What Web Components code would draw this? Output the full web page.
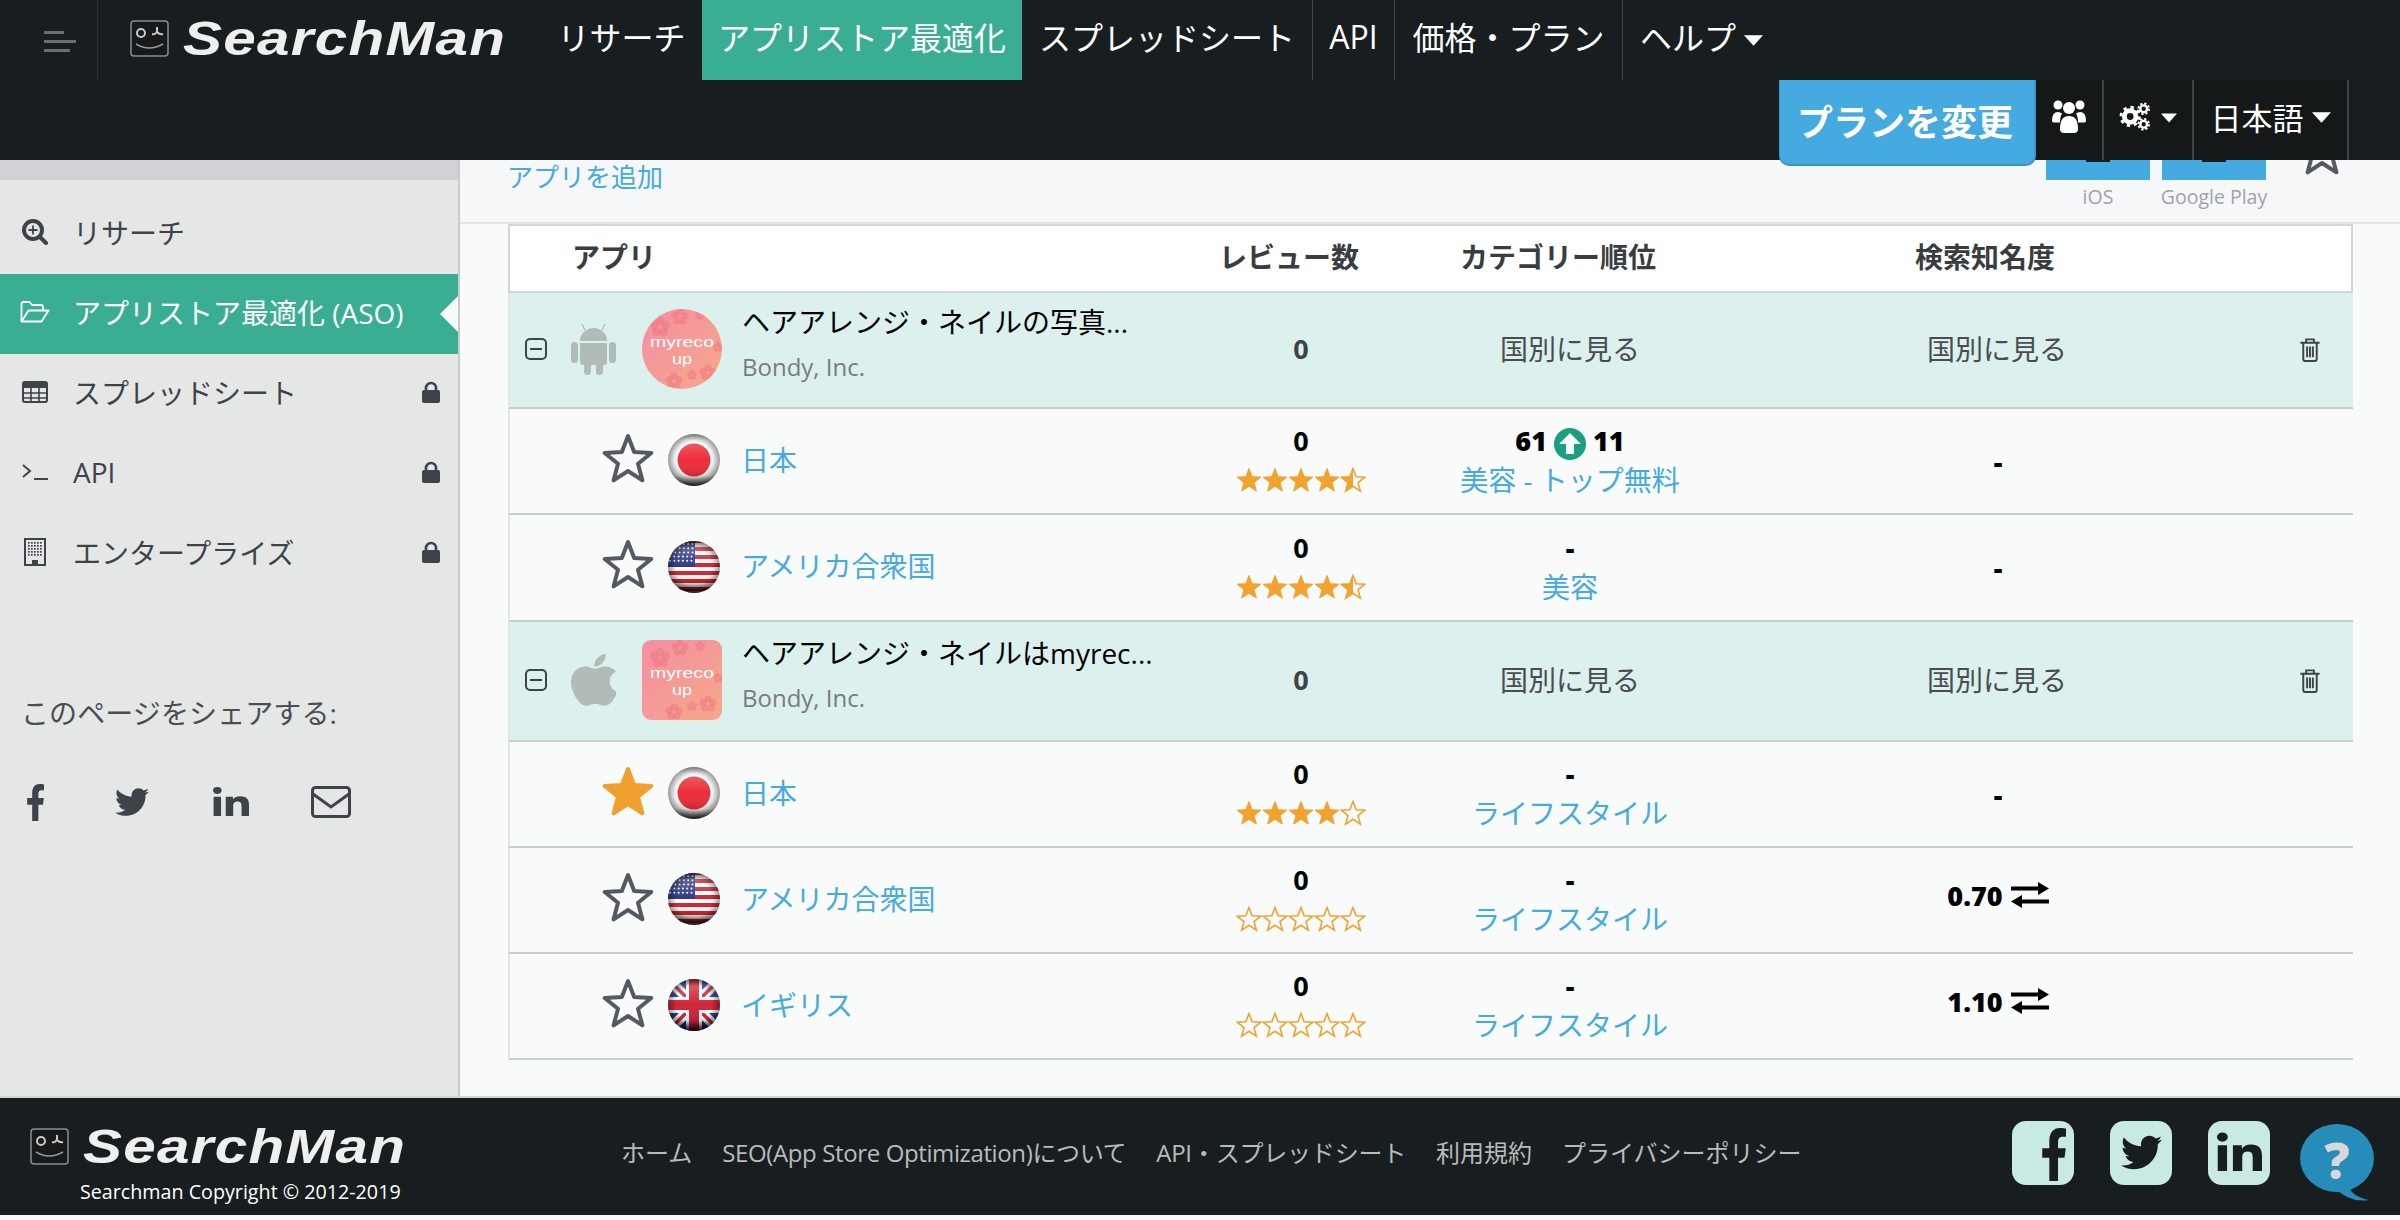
<!DOCTYPE html>
<html lang="ja">
<head>
<meta charset="utf-8">
<title>SearchMan</title>
<style>
html,body{margin:0;padding:0;width:2400px;height:1220px;overflow:hidden;background:#f9fbfa;}
body{display:flex;flex-direction:column;font-family:"Open Sans","Noto Sans CJK JP",sans-serif;}
</style>
</head>
<body>
<sm-topbar></sm-topbar>
<sm-layout>
  <sm-sidebar slot="side"></sm-sidebar>
  <sm-main slot="main">
    <sm-toolbar></sm-toolbar>
    <sm-table>
      <sm-group-row kind="android" shape="circle" title-text="ヘアアレンジ・ネイルの写真..." h="116"></sm-group-row>
      <sm-sub-row country="jp" name="日本" rating="4.5" h="106">
        <span slot="rank-top" class="r"><b>61</b><sm-icon name="uparrow" size="32" style="margin:0 7px"></sm-icon><b>11</b></span>
        <span slot="rank-link">美容 - トップ無料</span>
        <b slot="search">-</b>
      </sm-sub-row>
      <sm-sub-row country="us" name="アメリカ合衆国" rating="4.5" h="107">
        <b slot="rank-top">-</b>
        <span slot="rank-link">美容</span>
        <b slot="search">-</b>
      </sm-sub-row>
      <sm-group-row kind="apple" shape="square" title-text="ヘアアレンジ・ネイルはmyrec..." h="120"></sm-group-row>
      <sm-sub-row country="jp" name="日本" rating="4" fav h="106">
        <b slot="rank-top">-</b>
        <span slot="rank-link">ライフスタイル</span>
        <b slot="search">-</b>
      </sm-sub-row>
      <sm-sub-row country="us" name="アメリカ合衆国" rating="0" h="106" lifted>
        <b slot="rank-top">-</b>
        <span slot="rank-link">ライフスタイル</span>
        <b slot="search">0.70</b>
      </sm-sub-row>
      <sm-sub-row country="uk" name="イギリス" rating="0" h="106" lifted>
        <b slot="rank-top">-</b>
        <span slot="rank-link">ライフスタイル</span>
        <b slot="search">1.10</b>
      </sm-sub-row>
    </sm-table>
  </sm-main>
</sm-layout>
<sm-footer></sm-footer>

<script>
const FONT = '"Open Sans","Noto Sans CJK JP",sans-serif';
const TW = 'M459.37 151.716c.325 4.548.325 9.097.325 13.645 0 138.72-105.583 298.558-298.558 298.558-59.452 0-114.68-17.219-161.137-47.106 8.447.974 16.568 1.299 25.34 1.299 49.055 0 94.213-16.568 130.274-44.832-46.132-.975-84.792-31.188-98.112-72.772 6.498.974 12.995 1.624 19.818 1.624 9.421 0 18.843-1.3 27.614-3.573-48.081-9.747-84.143-51.98-84.143-102.985v-1.299c13.969 7.797 30.214 12.67 47.431 13.319-28.264-18.843-46.781-51.005-46.781-87.391 0-19.492 5.197-37.36 14.294-52.954 51.655 63.675 129.3 105.258 216.365 109.807-1.624-7.797-2.599-15.918-2.599-24.04 0-57.828 46.782-104.934 104.934-104.934 30.213 0 57.502 12.67 76.67 33.137 23.715-4.548 46.456-13.32 66.599-25.34-7.798 24.366-24.366 44.833-46.132 57.827 21.117-2.273 41.584-8.122 60.426-16.243-14.292 20.791-32.161 39.308-52.628 54.253z';
const FB = 'M279.14 288l14.22-92.66h-88.91v-60.13c0-25.35 12.42-50.06 52.24-50.06h40.42V6.26S260.43 0 225.36 0c-73.22 0-121.08 44.38-121.08 124.72v70.62H22.89V288h81.39v224h100.17V288z';
const LI = 'M100.28 448H7.4V148.9h92.88zM53.79 108.1C24.09 108.1 0 83.5 0 53.8a53.79 53.79 0 0 1 107.58 0c0 29.7-24.1 54.3-53.79 54.3zM447.9 448h-92.68V302.4c0-34.7-.7-79.2-48.29-79.2-48.29 0-55.69 37.7-55.69 76.7V448h-92.78V148.9h89.08v40.8h1.3c12.4-23.5 42.69-48.3 87.88-48.3 94 0 111.28 61.9 111.28 142.3V448z';
const AP = 'M318.7 268.7c-.2-36.7 16.4-64.4 50-84.8-18.8-26.9-47.2-41.7-84.7-44.6-35.5-2.8-74.3 20.7-88.5 20.7-15 0-49.4-19.7-76.4-19.7C63.3 141.2 4 184.8 4 273.5q0 39.3 14.4 81.2c12.8 36.7 59 126.7 107.2 125.2 25.2-.6 43-17.9 75.8-17.9 31.8 0 48.3 17.9 76.4 17.9 48.6-.7 90.4-82.5 102.6-119.3-65.2-30.7-61.7-90-61.7-91.9zm-56.6-164.2c27.3-32.4 24.8-61.9 24-72.5-24.1 1.4-52 16.4-67.9 34.9-17.5 19.8-27.8 44.3-25.6 71.9 26.1 2 49.9-11.4 69.5-34.3z';

const ICONS = {
  search:(c)=>`<svg viewBox="0 0 26 26" width="100%" height="100%"><circle cx="11" cy="11" r="9" fill="none" stroke="${c}" stroke-width="4"/><path d="M18 18l6 6" stroke="${c}" stroke-width="4" stroke-linecap="round"/><path d="M11 6.5v9M6.5 11h9" stroke="${c}" stroke-width="1.8"/></svg>`,
  folder:(c)=>`<svg viewBox="0 0 30 24" width="100%" height="100%" fill="none" stroke="${c}" stroke-width="1.8" stroke-linejoin="round"><path d="M1.5 21V4q0-2 2-2h6l2.5 3h9q2 0 2 2v3"/><path d="M1.5 21.5h20l7-11H8.500z"/></svg>`,
  table:(c)=>`<svg viewBox="0 0 26 22" width="100%" height="100%"><rect x="1" y="1" width="24" height="20" rx="2" fill="none" stroke="${c}" stroke-width="2"/><path d="M1 2h24v5H1z" fill="${c}"/><path d="M1 12h24M1 17h24M9 6v15M17 6v15" stroke="${c}" stroke-width="1.6"/></svg>`,
  terminal:(c)=>`<svg viewBox="0 0 26 18" width="100%" height="100%" fill="none" stroke="${c}" stroke-width="2"><path d="M1 2l7 6-7 6M12 16h14"/></svg>`,
  building:(c)=>{let d='';for(let y=4;y<19;y+=3)for(let x=4;x<19;x+=3)d+=`<rect x="${x}" y="${y}" width="1.7" height="1.7" fill="${c}"/>`;return `<svg viewBox="0 0 22 28" width="100%" height="100%"><rect x="1" y="1" width="20" height="26" fill="none" stroke="${c}" stroke-width="2"/>${d}<path d="M8 27v-5h6v5z" fill="${c}"/></svg>`},
  lock:(c)=>`<svg viewBox="0 0 18 22" width="100%" height="100%"><path d="M4 10V7a5 5 0 0 1 10 0v3" fill="none" stroke="${c}" stroke-width="2.600"/><rect x="0" y="9" width="18" height="13" rx="2" fill="${c}"/></svg>`,
  fb:(c)=>`<svg viewBox="20 0 276 512" width="100%" height="100%" preserveAspectRatio="none"><path d="${FB}" fill="${c}"/></svg>`,
  tw:(c)=>`<svg viewBox="0 0 512 512" width="100%" height="100%"><path d="${TW}" fill="${c}"/></svg>`,
  li:(c)=>`<svg viewBox="0 0 448 512" width="100%" height="100%" preserveAspectRatio="none"><path d="${LI}" fill="${c}" transform="translate(0,16)"/></svg>`,
  mail:(c)=>`<svg viewBox="0 0 40 32" width="100%" height="100%" fill="none" stroke="${c}" stroke-width="3"><rect x="1.500" y="1.500" width="37" height="29" rx="3"/><path d="M2 8l18 13L38 8"/></svg>`,
  users:(c)=>`<svg viewBox="0 0 34 34" width="100%" height="100%" fill="${c}"><circle cx="6" cy="6" r="4.500"/><circle cx="28" cy="6" r="4.500"/><circle cx="17" cy="9" r="6"/><path d="M0 22q0-9 6-9 2 0 4 1.500-2 3-2 9H2q-2 0-2-1.500z"/><path d="M34 22q0-9-6-9-2 0-4 1.500 2 3 2 9h6q2 0 2-1.500z"/><path d="M8 30q0-13 9-13t9 13q0 4-4 4H12q-4 0-4-4z"/></svg>`,
  gears:(c)=>`<svg viewBox="0 0 32 30" width="100%" height="100%" fill="none" stroke="${c}"><circle cx="11" cy="15" r="6" stroke-width="5"/><circle cx="11" cy="15" r="9.500" stroke-width="3" stroke-dasharray="3.500 3.960"/><circle cx="25" cy="7" r="3.500" stroke-width="2.500"/><circle cx="25" cy="7" r="5.500" stroke-width="2" stroke-dasharray="2.300 2"/><circle cx="25" cy="23" r="3.500" stroke-width="2.500"/><circle cx="25" cy="23" r="5.500" stroke-width="2" stroke-dasharray="2.300 2"/></svg>`,
  caret:(c)=>`<svg viewBox="0 0 20 11" width="100%" height="100%"><path d="M0 0h20L10 11z" fill="${c}"/></svg>`,
  minus:(c)=>`<svg viewBox="0 0 22 22" width="100%" height="100%" fill="none" stroke="${c}" stroke-width="2"><rect x="1" y="1" width="20" height="20" rx="4"/><path d="M5 11h12"/></svg>`,
  trash:(c)=>`<svg viewBox="0 0 22 26" width="100%" height="100%" fill="none" stroke="${c}" stroke-width="2"><path d="M1 6h20M7 6V2.500h8V6M4 6v17q0 2 2 2h10q2 0 2-2V6M8 10v11M11 10v11M14 10v11"/></svg>`,
  android:(c)=>`<svg viewBox="0 0 45 52" width="100%" height="100%" fill="${c}"><path d="M9 18a13.500 13 0 0 1 27 0z"/><path d="M9 20h27v19q0 3-3 3H12q-3 0-3-3z"/><rect x="0" y="19" width="7" height="21" rx="3.500"/><rect x="38" y="19" width="7" height="21" rx="3.500"/><rect x="13" y="38" width="7" height="14" rx="3.500"/><rect x="25" y="38" width="7" height="14" rx="3.500"/><path d="M14 7l-3-6M31 7l3-6" stroke="${c}" stroke-width="1.200"/></svg>`,
  apple:(c)=>`<svg viewBox="4 32 365 449" width="100%" height="100%" preserveAspectRatio="none"><path d="${AP}" fill="${c}"/></svg>`,
  uparrow:()=>`<svg viewBox="0 0 32 32" width="100%" height="100%"><circle cx="16" cy="16" r="16" fill="#1c9e83"/><path d="M16 5l11 11h-7v10h-8V16H5z" fill="#f5fbfa"/></svg>`,
  swap:(c)=>`<svg viewBox="0 0 38 26" width="100%" height="100%" fill="${c}"><path d="M0 4.500h27V0l11 6.500-11 6.500V8.500H0z"/><path d="M38 17.500H11V13L0 19.500 11 26v-4.500h27z"/></svg>`
};

function def(name, css, render){
  customElements.define(name, class extends HTMLElement{
    connectedCallback(){
      if(this.shadowRoot) return;
      const r=this.attachShadow({mode:'open'});
      r.innerHTML=`<style>${css}</style>`+render(this);
    }
  });
}

def('sm-icon',`:host{display:inline-block;line-height:0;flex:none;vertical-align:middle}`,el=>{
  const s=el.getAttribute('size')||24;
  const w=el.getAttribute('w')||s, h=el.getAttribute('h')||s;
  const c=el.getAttribute('color')||'#3e4249';
  el.style.width=w+'px'; el.style.height=h+'px';
  return ICONS[el.getAttribute('name')](c);
});

def('sm-logo',`
  :host{display:flex;align-items:center}
  .box{width:39px;height:37px;flex:none;margin-right:14px}
  .t{font:italic 700 46px/37px "Liberation Sans",sans-serif;color:#efefef;white-space:nowrap;transform-origin:left center;letter-spacing:1px;display:block;width:270px}
`,()=>`
  <svg class="box" viewBox="0 0 39 37"><rect x="1" y="1" width="37" height="35" rx="3" fill="#161a1b" stroke="#8a8d8d" stroke-width="1.500"/><circle cx="11" cy="13" r="4" fill="none" stroke="#c9c9c9" stroke-width="2"/><path d="M22 14q4 1 5-3M27 11l0-4M27 12q3 3 6 2" fill="none" stroke="#c9c9c9" stroke-width="2"/><path d="M6 24q13 8 27 0" fill="none" stroke="#999" stroke-width="1.500"/></svg>
  <span class="t" style="transform:scale(1.27,1.06)">SearchMan</span>`);

def('sm-nav-item',`
  :host{display:flex;align-items:center;justify-content:center;height:80px;padding-bottom:8px;box-sizing:border-box;font-size:32px;color:#fff;white-space:nowrap;font-weight:400}
  :host([active]){background:#3aae93}
  :host([sep]){border-right:1px solid #3f4445}
`,el=>{el.style.width=el.getAttribute('w')+'px';return `<slot></slot>`});

def('sm-topbar',`
  :host{display:block;height:160px;background:#181e1f;position:relative;z-index:5;flex:none;font-family:${FONT}}
  .r1{display:flex;height:80px}
  .ham{width:98px;box-sizing:border-box;border-right:1px solid #2b3031;display:flex;flex-direction:column;gap:6px;padding:31px 0 0 44px}
  .ham i{display:block;height:3px;background:#6c6f70}
  sm-logo{width:443px;padding-left:32px;box-sizing:border-box;padding-bottom:4px}
  .r2{display:flex;justify-content:flex-end;height:80px;padding-right:51px}
  .plan{width:257px;height:86px;box-sizing:border-box;background:#45aae0;color:#fff;font-weight:700;font-size:36px;display:flex;align-items:center;justify-content:center;border-radius:0 0 10px 10px;border-bottom:2px solid #3d95c6;border-right:2px solid #3d95c6;border-left:1px solid #3d95c6;padding:0 4px 4px 0;position:relative;z-index:2}
  .c{height:80px;background:#151818;box-sizing:border-box;border-right:2px solid #3f4343;display:flex;align-items:center;justify-content:center;color:#fff;font-size:31px;gap:8px;font-weight:400;padding-bottom:8px}
  .u{width:68px}.g{width:90px}.l{width:155px}
`,()=>`
  <div class="r1">
    <div class="ham"><i style="width:20px"></i><i style="width:32px"></i><i style="width:26px"></i></div>
    <sm-logo></sm-logo>
    <sm-nav-item w="161">リサーチ</sm-nav-item>
    <sm-nav-item w="320" active>アプリストア最適化</sm-nav-item>
    <sm-nav-item w="291" sep>スプレッドシート</sm-nav-item>
    <sm-nav-item w="82" sep>API</sm-nav-item>
    <sm-nav-item w="228" sep>価格・プラン</sm-nav-item>
    <sm-nav-item w="157">ヘルプ<sm-icon name="caret" w="19" h="11" color="#fff" style="margin:6px 0 0 8px"></sm-icon></sm-nav-item>
  </div>
  <div class="r2">
    <div class="plan">プランを変更</div>
    <div class="c u"><sm-icon name="users" size="34" color="#fff"></sm-icon></div>
    <div class="c g"><sm-icon name="gears" w="32" h="29" color="#fff"></sm-icon><sm-icon name="caret" w="16" h="10" color="#fff" style="margin-left:2px"></sm-icon></div>
    <div class="c l">日本語<sm-icon name="caret" w="19" h="11" color="#fff" style="margin-left:0"></sm-icon></div>
  </div>`);

def('sm-layout',`
  :host{display:flex;height:936px;flex:none}
  ::slotted([slot=side]){flex:none}
  ::slotted([slot=main]){flex:1}
`,()=>`<slot name="side"></slot><slot name="main"></slot>`);

def('sm-side-item',`
  :host{display:flex;align-items:center;height:80px;padding:0 18px 4px 22px;box-sizing:border-box;color:#3e4249;font-size:28px;position:relative;white-space:nowrap}
  :host([active]){background:#3aae93;color:#fff}
  .i{width:26px;height:26px;display:flex;align-items:center;justify-content:center;margin-right:25px;flex:none}
  .t{flex:1;display:block}
  .tri{position:absolute;right:0;top:22px;width:0;height:0;border-top:18px solid transparent;border-bottom:18px solid transparent;border-right:18px solid #f7f9fa}
`,el=>{
  const a=el.hasAttribute('active');
  const ic=el.getAttribute('icon');
  const w=el.getAttribute('iw')||26,h=el.getAttribute('ih')||26;
  return `<span class="i"><sm-icon name="${ic}" w="${w}" h="${h}" color="${a?'#fff':'#3e4249'}"></sm-icon></span><span class="t"><slot></slot></span>`+
   (el.hasAttribute('locked')?`<sm-icon name="lock" w="18" h="22" color="#3e4249"></sm-icon>`:'')+
   (a?`<span class="tri"></span>`:'');
});

def('sm-sidebar',`
  :host{display:block;width:460px;box-sizing:border-box;border-right:2px solid #c9cbcc;background:#e5e7e7;font-family:${FONT}}
  .band{height:20px;background:#d0d2d5;margin-bottom:14px}
  .share{margin:99px 0 0 21px;font-size:28px;color:#4a4e52;line-height:40px;white-space:nowrap;letter-spacing:.1px}
  .soc{display:flex;margin:49px 0 0 27px;align-items:center;height:40px}
`,()=>`
  <div class="band"></div>
  <sm-side-item icon="search">リサーチ</sm-side-item>
  <sm-side-item icon="folder" iw="30" ih="24" active>アプリストア最適化 (ASO)</sm-side-item>
  <sm-side-item icon="table" ih="22" locked>スプレッドシート</sm-side-item>
  <sm-side-item icon="terminal" ih="18" locked>API</sm-side-item>
  <sm-side-item icon="building" iw="22" ih="28" locked>エンタープライズ</sm-side-item>
  <div class="share">このページをシェアする:</div>
  <div class="soc">
    <sm-icon name="fb" w="17" h="37"></sm-icon>
    <sm-icon name="tw" w="34" h="34" style="margin-left:71px"></sm-icon>
    <sm-icon name="li" w="36" h="33" style="margin-left:64px"></sm-icon>
    <sm-icon name="mail" w="40" h="32" style="margin-left:62px"></sm-icon>
  </div>`);

def('sm-main',`:host{display:block;background:#f9fbfa;font-family:${FONT}}`,()=>`<slot></slot>`);

def('sm-toolbar',`
  :host{display:flex;height:64px;box-sizing:border-box;background:#f6f7f9;border-bottom:2px solid #e3e4e4;padding:0 52px 0 47px;justify-content:space-between;align-items:flex-start;overflow:hidden}
  a{color:#45aae0;font-size:26px;line-height:34px;text-decoration:none;white-space:nowrap}
  .right{display:flex;align-items:flex-start}
  .b{display:flex;flex-direction:column;align-items:center;width:104px;color:#a0a3a5;font-size:19.500px;line-height:34px;white-space:nowrap}
  .b i{display:block;width:100%;height:20px;background:#45aae0;position:relative}
  .b i::before{content:"";position:absolute;top:0;left:38%;width:24%;height:2px;background:#181e1f}
  .b + .b{margin-left:12px}
  .star{margin-left:30px;margin-top:-35px}
`,()=>`
  <a>アプリを追加</a>
  <div class="right">
    <div class="b"><i></i><span>iOS</span></div>
    <div class="b"><i></i><span>Google Play</span></div>
    <sm-big-star class="star"></sm-big-star>
  </div>`);

function starPts(cx,cy,R,r){let p=[];for(let i=0;i<10;i++){const a=-Math.PI/2+i*Math.PI/5,q=i%2?r:R;p.push((cx+q*Math.cos(a)).toFixed(2)+','+(cy+q*Math.sin(a)).toFixed(2));}return p.join(' ');}

def('sm-big-star',`:host{display:inline-block;width:52px;height:52px;line-height:0;flex:none}`,el=>{
  const f=el.hasAttribute('fav');
  return `<svg viewBox="0 0 52 52" width="52" height="52"><polygon points="${starPts(26,27.500,24.500,10.500)}" fill="${f?'#f0a02e':'none'}" stroke="${f?'#f0a02e':'#555962'}" stroke-width="4" stroke-linejoin="round"/></svg>`;
});

def('sm-stars',`:host{display:inline-flex;line-height:0}svg{display:block}`,el=>{
  const v=parseFloat(el.getAttribute('value')||0);let o='';
  for(let i=0;i<5;i++){
    const full=v>=i+1,half=!full&&v>i;
    const pts=starPts(13,14,12.500,5.300);
    o+=`<svg width="26" height="26" viewBox="0 0 26 26"><defs><clipPath id="h${i}"><rect x="0" y="0" width="13" height="26"/></clipPath></defs>
    <polygon points="${pts}" fill="${full?'#f2a22e':'none'}" stroke="#f2a22e" stroke-width="${full?1:1.600}"/>
    ${half?`<polygon points="${pts}" fill="#f2a22e" clip-path="url(#h${i})"/>`:''}</svg>`;
  }
  return o;
});

def('sm-flag',`:host{display:inline-block;width:52px;height:52px;line-height:0;flex:none}`,el=>{
  const c=el.getAttribute('country');let body='';
  if(c==='jp'){
    body=`<rect width="52" height="52" fill="#fff"/><circle cx="26" cy="26" r="16.500" fill="#ec2c3a"/>`;
  }else if(c==='us'){
    let s='';for(let i=0;i<7;i++)s+=`<rect y="${i*8-2}" width="52" height="4" fill="#d2232f"/>`;
    let d='';for(let y=3;y<24;y+=4.200)for(let x=2+(Math.round(y)%2);x<26;x+=4.300)d+=`<circle cx="${x}" cy="${y}" r="1" fill="#fff"/>`;
    body=`<rect width="52" height="52" fill="#fff"/>${s}<rect width="27" height="26" fill="#2d3a86"/>${d}`;
  }else{
    body=`<rect width="52" height="52" fill="#233b8a"/>
    <path d="M0 0L52 52M52 0L0 52" stroke="#fff" stroke-width="10"/>
    <path d="M0 0L52 52M52 0L0 52" stroke="#cf2436" stroke-width="3.500"/>
    <path d="M26 0V52M0 26H52" stroke="#fff" stroke-width="16"/>
    <path d="M26 0V52M0 26H52" stroke="#cf2436" stroke-width="10"/>`;
  }
  return `<svg viewBox="0 0 52 52" width="52" height="52">
  <defs><clipPath id="c"><circle cx="26" cy="26" r="26"/></clipPath>
  <linearGradient id="sh" x1="0" y1="0" x2="0" y2="1"><stop offset="0" stop-color="#000" stop-opacity=".25"/><stop offset=".12" stop-color="#fff" stop-opacity=".25"/><stop offset=".5" stop-color="#fff" stop-opacity="0"/><stop offset=".8" stop-color="#000" stop-opacity=".14"/><stop offset="1" stop-color="#000" stop-opacity=".85"/></linearGradient>
  <radialGradient id="rim" cx=".5" cy=".5" r=".5"><stop offset=".68" stop-color="#000" stop-opacity="0"/><stop offset="1" stop-color="#000" stop-opacity=".4"/></radialGradient></defs>
  <g clip-path="url(#c)">${body}<rect width="52" height="52" fill="url(#sh)"/><rect width="52" height="52" fill="url(#rim)"/></g></svg>`;
});

def('sm-app-icon',`:host{display:inline-block;width:80px;height:80px;line-height:0;flex:none}text{font-family:"Liberation Sans",sans-serif;font-weight:400;fill:#fff}`,el=>{
  const sq=el.getAttribute('shape')==='square';
  const fl=(x,y,s)=>{let o='';for(let i=0;i<5;i++){const a=i*72*Math.PI/180-1.57;o+=`<circle cx="${(x+Math.cos(a)*s).toFixed(1)}" cy="${(y+Math.sin(a)*s).toFixed(1)}" r="${(s*.72).toFixed(1)}" fill="#f0707f" opacity=".45"/>`;}return o;};
  return `<svg viewBox="0 0 80 80" width="80" height="80"><defs><linearGradient id="g" x1="0" y1="0" x2="1" y2="1"><stop offset="0" stop-color="#f58ea3"/><stop offset="1" stop-color="#f6a88a"/></linearGradient><clipPath id="k">${sq?'<rect width="80" height="80" rx="9"/>':'<circle cx="40" cy="40" r="40"/>'}</clipPath></defs>
  <g clip-path="url(#k)"><rect width="80" height="80" fill="url(#g)"/>${fl(38,8,5)}${fl(18,18,6)}${fl(58,6,3)}${fl(66,64,5)}${fl(32,72,5)}${fl(50,66,3)}${fl(76,38,3)}</g>
  <text x="40" y="38" text-anchor="middle" font-size="15" textLength="64" lengthAdjust="spacingAndGlyphs">myreco</text><text x="40" y="55" text-anchor="middle" font-size="15" textLength="20" lengthAdjust="spacingAndGlyphs">up</text></svg>`;
});

def('sm-table',`
  :host{display:block;margin-left:48px;width:1845px}
  .head{display:grid;grid-template-columns:638px 282px 256px 598px 1fr;height:69px;box-sizing:border-box;background:#fff;border:2px solid #d3d6d6;font-weight:700;font-size:28px;color:#3a3d40;align-items:center;text-align:center;white-space:nowrap}
  .head span{padding-bottom:5px}
  .head span:first-child{text-align:left;padding-left:62px}
`,()=>`
  <div class="head"><span>アプリ</span><span>レビュー数</span><span>カテゴリー順位</span><span>検索知名度</span><span></span></div>
  <slot></slot>`);

const rowCss = `
  :host{display:grid;grid-template-columns:650px 282px 256px 598px 1fr;box-sizing:border-box;border-left:2px solid #e2e6e5;border-bottom:2px solid #c8d0ce;align-items:center;text-align:center;margin-right:0}
`;

def('sm-group-row',rowCss+`
  :host{background:#dcf0ed;font-size:28px;color:#4a4d50;padding-bottom:2px}
  .a{display:flex;align-items:center;text-align:left;padding-left:15px}
  .x{display:flex;flex-direction:column;margin:-8px 0 0 20px;white-space:nowrap}
  .tt{color:#000;line-height:44px;font-size:28px}
  .sub{color:#7a7c7e;font-size:24px;line-height:46px}
  b{color:#3f4346;font-weight:700;font-size:27px}
  .tr{display:flex;justify-content:flex-start;padding-left:0}
  .up{margin-top:-2px}
`,el=>{
  el.style.height=el.getAttribute('h')+'px';
  const k=el.getAttribute('kind');
  return `<div class="a"><sm-icon name="minus" size="22"></sm-icon>
    <sm-icon name="${k}" w="45" h="52" color="#b1bbb8" style="margin:0 26px 0 24px"></sm-icon>
    <sm-app-icon shape="${el.getAttribute('shape')}"></sm-app-icon>
    <div class="x"><span class="tt">${el.getAttribute('title-text')}</span><span class="sub">Bondy, Inc.</span></div></div>
    <div class="up"><b>0</b></div><div class="up">国別に見る</div><div class="up">国別に見る</div>
    <div class="tr"><sm-icon name="trash" w="22" h="25" style="margin-left:3px"></sm-icon></div>`;
});

def('sm-sub-row',rowCss+`
  :host{background:#f9fbfa;font-size:28px;color:#000}
  .a{display:flex;align-items:center;text-align:left;padding:0 0 2px 92px}
  .bs{margin-top:-3px}
  .nm{color:#45aae0;margin-left:21px;white-space:nowrap;margin-top:-3px}
  .st{display:flex;flex-direction:column;align-items:center}
  .top{height:38px;line-height:38px;font-weight:700;font-size:27px;display:flex;align-items:center;justify-content:center}
  .bot{height:40px;line-height:40px;display:flex;align-items:center;justify-content:center;color:#45aae0;white-space:nowrap}
  .srch{font-weight:700;font-size:27px;display:flex;align-items:center;justify-content:center;gap:8px;margin-left:2px}
  .lift{margin-bottom:10px}
`,el=>{
  el.style.height=el.getAttribute('h')+'px';
  const lift=el.hasAttribute('lifted');
  return `<div class="a"><sm-big-star class="bs" ${el.hasAttribute('fav')?'fav':''}></sm-big-star><sm-flag country="${el.getAttribute('country')}" style="margin-left:14px"></sm-flag><span class="nm">${el.getAttribute('name')}</span></div>
   <div class="st"><div class="top">0</div><div class="bot"><sm-stars value="${el.getAttribute('rating')}"></sm-stars></div></div>
   <div class="st"><div class="top"><slot name="rank-top"></slot></div><div class="bot"><slot name="rank-link"></slot></div></div>
   <div class="srch ${lift?'lift':''}"><slot name="search"></slot>${lift?`<sm-icon name="swap" w="38" h="26" color="#000"></sm-icon>`:''}</div><div></div>`;
});

def('sm-footer',`
  :host{display:block;height:119px;box-sizing:border-box;border-top:2px solid #d4d5d6;background:#181e1f;flex:none;font-family:${FONT};position:relative}
  .g{display:grid;grid-template-columns:621px 1fr auto;height:100%}
  .l{padding:30px 0 0 30px}
  .l sm-logo{height:37px}
  .c{color:#fff;font-size:19.700px;line-height:30px;margin:12px 0 0 50px;white-space:nowrap}
  .n{display:flex;font-size:24px;color:#b7bcbb;white-space:nowrap;padding-top:37px;gap:30px;line-height:36px}
  .s{display:flex;gap:36px;padding:23px 26px 0 0;position:relative}
  .box{width:62px;height:64px;border-radius:14px;background:#c9eae3;display:flex;box-sizing:border-box;flex:none}
  .q{position:relative;width:74px;height:77px;margin:3px 0 0 -6px;flex:none}
  .q svg{display:block}
  .q span{position:absolute;left:0;right:0;top:6px;text-align:center;color:#d8d8d8;font:800 50px/60px "Open Sans",sans-serif}
`,()=>`
  <div class="g">
    <div class="l"><sm-logo></sm-logo><div class="c">Searchman Copyright © 2012-2019</div></div>
    <div class="n"><span>ホーム</span><span style="letter-spacing:-.38px">SEO(App Store Optimization)について</span><span style="letter-spacing:-.2px">API・スプレッドシート</span><span>利用規約</span><span>プライバシーポリシー</span></div>
    <div class="s">
      <div class="box" style="padding:7px 0 0 30px"><sm-icon name="fb" w="24" h="53" color="#181e1f"></sm-icon></div>
      <div class="box" style="padding:11px 0 0 11px"><sm-icon name="tw" w="41" h="41" color="#181e1f"></sm-icon></div>
      <div class="box" style="padding:10px 0 0 9px"><sm-icon name="li" w="45" h="44" color="#181e1f"></sm-icon></div>
      <div class="q"><svg viewBox="0 0 74 77" width="74" height="77"><ellipse cx="37" cy="34" rx="37" ry="34" fill="#268dbb"/><path d="M48 60q2 12 21 16q-20 3-34-12z" fill="#268dbb"/></svg><span>?</span></div>
    </div>
  </div>`);
</script>
</body>
</html>
